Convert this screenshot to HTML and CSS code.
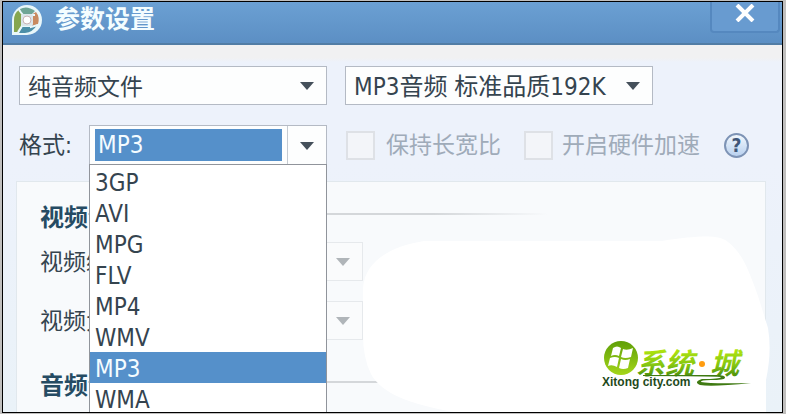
FILE: index.html
```html
<!DOCTYPE html>
<html lang="zh-CN">
<head>
    <meta charset="UTF-8">
    <meta name="viewport" content="width=device-width, initial-scale=1.0">
    <title>参数设置</title>
    <link rel="stylesheet" href="styles.css">
</head>
<body>

<div class="window">
    <header class="titlebar">
        <svg class="app-icon" viewBox="0 0 32 32" aria-hidden="true">
            <path d="M2 31V16A15 15 0 1 1 17 31Z" fill="#e9f7fa"/>
            <path d="M4 28V16Q4 9 9 6L13 12L11 24L8 28Z" fill="#86a650"/>
            <path d="M10 5Q17 1 25 7L21 11H12Z" fill="#6fa596"/>
            <path d="M26 8Q30 13 28 20L21 23V11Z" fill="#c88a60"/>
            <path d="M27 21Q23 28 15 29H9L13 22H21Z" fill="#4c8fa8"/>
            <path d="M9 6L13 11H25M21 11V23L28 21M21 22H12L8 28M12 22V11" fill="none" stroke="#e9f7fa" stroke-width="2"/>
            <rect x="11" y="10" width="12" height="12" rx="2" fill="#dbe6ea"/>
            <circle cx="17" cy="16" r="4" fill="#fff" stroke="#c9b3b6"/>
        </svg>
        <h1 class="title">参数设置</h1>
        <button class="close" type="button" aria-label="关闭">
            <svg viewBox="0 0 20 18"><path d="M2 1L18 17M18 1L2 17"/></svg>
        </button>
    </header>

    <form class="settings">
        <div class="row">
            <div class="dropdown">
                <select aria-label="文件类型"><option>纯音频文件</option></select>
            </div>
            <div class="dropdown quality">
                <select aria-label="品质"><option>MP3音频 标准品质192K</option></select>
            </div>
        </div>

        <div class="row format-row">
            <label class="format-label" for="format">格式:</label>
            <div class="combo">
                <input id="format" class="combo-input" type="text" value="MP3" role="combobox" aria-expanded="true" aria-controls="format-list">
                <button class="combo-button" type="button" aria-label="展开"></button>
                <ul id="format-list" class="combo-list" role="listbox">
                    <li role="option">3GP</li>
                    <li role="option">AVI</li>
                    <li role="option">MPG</li>
                    <li role="option">FLV</li>
                    <li role="option">MP4</li>
                    <li role="option">WMV</li>
                    <li role="option" class="selected" aria-selected="true">MP3</li>
                    <li role="option">WMA</li>
                </ul>
            </div>
            <label class="check"><input type="checkbox" disabled>保持长宽比</label>
            <label class="check"><input type="checkbox" disabled>开启硬件加速</label>
            <button class="help" type="button" aria-label="帮助">?</button>
        </div>

        <div class="panel">
            <h2 class="section-title">视频</h2>
            <div class="field">
                <label for="video-codec">视频编码:</label>
                <div class="dropdown disabled"><select id="video-codec" disabled></select></div>
            </div>
            <div class="field">
                <label for="video-size">视频大小:</label>
                <div class="dropdown disabled"><select id="video-size" disabled></select></div>
            </div>
            <h2 class="section-title">音频</h2>
        </div>
    </form>

    <svg class="cover" viewBox="0 0 408 178" aria-hidden="true">
        <path d="M1 54C3 28 26 13 62 7H300C340 1 357 1 366 8C380 19 386 34 396 62L406 94Q410 118 404 146V178H92C48 170 20 160 9 140Q1 124 1 100Z" fill="#fff"/>
    </svg>

    <svg class="logo" viewBox="0 0 160 52">
        <defs>
            <linearGradient id="ball" x1="0" y1="0" x2="0" y2="1">
                <stop offset="0" stop-color="#5f9f08"/>
                <stop offset="1" stop-color="#a4d61a"/>
            </linearGradient>
            <linearGradient id="leaf" x1="0" y1="0" x2="0" y2="1">
                <stop offset="0.2" stop-color="#b4e610"/>
                <stop offset="0.6" stop-color="#84c610"/>
                <stop offset="1" stop-color="#2f7208"/>
            </linearGradient>
        </defs>
        <circle cx="21" cy="20" r="17" fill="url(#ball)"/>
        <path d="M13 10Q17 7 21 10L19 18Q15 16 11 18ZM23 11Q27 13 33 10L31 19Q25 21 21 19ZM10 20Q15 18 19 20L17 29Q12 26 8 28ZM21 21Q25 23 30 21L28 30Q23 32 19 30Z" fill="#fff"/>
        <text class="logo-name" x="36" y="36">系统</text>
        <circle cx="102" cy="26" r="3" fill="#ff9c10"/>
        <text class="logo-name" x="110" y="36">城</text>
        <path d="M43 37H116Q126 37 125 40Q124 42 111 42Q100 42 101 44Q110 46 151 45Q112 49 100 47Q93 44 102 41Q120 41 121 39Q110 38 43 38Z" fill="#3f7a12"/>
        <text class="logo-url" x="2" y="48">Xitong city.com</text>
    </svg>
</div>

</body>
</html>
```
FILE: styles.css
```css
* {
    margin: 0;
    padding: 0;
    box-sizing: border-box;
}

body {
    display: flex;
    height: 100vh;
    padding: 1px 3px 1px 2px;
    overflow: hidden;
    background: #c0bfbe;
    color: #35444f;
    font: 23px/32px "DejaVu Sans Condensed", "Noto Sans CJK SC", sans-serif;
}

input, select, button {
    font: inherit;
    color: inherit;
}

.window {
    position: relative;
    flex: 1;
    display: flex;
    flex-direction: column;
    overflow: hidden;
    border: 1px solid #000;
    background: linear-gradient(#f1f1f2 56px, #edf2fb 60px, #edf2fb 160px, #eaf2f8);
}

/* Title bar */
.titlebar {
    display: flex;
    align-items: center;
    flex: none;
    height: 43px;
    padding: 0 2px 6px 7px;
    background: linear-gradient(#6ba0d3, #5c8fc4);
    border-bottom: 2px solid #527da5;
}

.app-icon {
    width: 32px;
    height: 32px;
    margin-right: 13px;
}

.title {
    flex: 1;
    color: #f4fdff;
    font-size: 25px;
    font-weight: 700;
}

.close {
    align-self: flex-start;
    width: 70px;
    height: 31px;
    border: 2px solid #5588bf;
    border-top: 0;
    border-radius: 0 0 4px 4px;
    background: #689bd0;
}

.close svg {
    display: block;
    width: 20px;
    height: 18px;
    margin: 0 auto 8px;
    fill: none;
    stroke: #fff;
    stroke-width: 4;
}

/* Form rows */
.settings {
    flex: 1;
    display: flex;
    flex-direction: column;
    padding-top: 21px;
}

.row {
    display: flex;
    align-items: center;
    gap: 18px;
    padding: 0 16px;
    margin-bottom: 20px;
}

.dropdown {
    position: relative;
    flex: 0 1 308px;
}

.dropdown select {
    display: block;
    width: 100%;
    height: 39px;
    padding: 3px 8px 0;
    appearance: none;
    border: 1px solid #b4bac4;
    border-radius: 0;
    background: #fdfefe;
}

.dropdown::after {
    content: "";
    position: absolute;
    top: 16px;
    right: 13px;
    border: 7px solid transparent;
    border-top: 8px solid #45505b;
    border-bottom: 0;
    pointer-events: none;
}

.dropdown.quality {
    font-size: 24px;
}

.dropdown.disabled select {
    border-color: #dfe2e6;
    background: #fbfcfd;
}

.dropdown.disabled::after {
    border-top-color: #b0b5b9;
}

.format-row {
    gap: 0;
    margin-bottom: 16px;
}

.format-label {
    flex: none;
    width: 70px;
}

/* Format combo box */
.combo {
    position: relative;
    display: flex;
    flex: 0 1 238px;
    min-width: 0;
    height: 40px;
    border: 1px solid #b4bac4;
    background: #fdfefe;
    font-size: 24px;
}

.combo-input {
    flex: 1;
    min-width: 0;
    margin: 3px 5px;
    padding: 0 3px;
    border: 0;
    background: #5590ca;
    color: #f4fcff;
}

.combo-button {
    flex: none;
    width: 39px;
    border: 0;
    border-left: 1px solid #c5cbd2;
    background: none;
}

.combo-button::after {
    content: "";
    display: block;
    width: 0;
    margin: 2px auto 0;
    border: 7px solid transparent;
    border-top: 8px solid #45505b;
    border-bottom: 0;
}

.combo-list {
    position: absolute;
    z-index: 5;
    top: 100%;
    left: -1px;
    right: -1px;
    padding-top: 1px;
    border: 1px solid #90949b;
    background: #fff;
    list-style: none;
}

.combo-list li {
    height: 31px;
    padding: 0 5px;
    line-height: 34px;
}

.combo-list .selected {
    background: #5590ca;
    color: #f4fcff;
}

/* Disabled check boxes */
.check {
    display: flex;
    align-items: center;
    flex: none;
    gap: 11px;
    margin-left: 19px;
    color: #9fabb9;
    white-space: nowrap;
}

.check + .check {
    gap: 9px;
    margin-left: 23px;
}

.check input {
    width: 29px;
    height: 29px;
    appearance: none;
    border: 2px solid #dee1e6;
    background: #f3f5f9;
}

.help {
    flex: none;
    width: 25px;
    height: 25px;
    margin-left: 24px;
    border: 2px solid #7d93b5;
    border-radius: 50%;
    background: linear-gradient(#f2f8fd, #b9d1ef);
    color: #3f5678;
    font-size: 19px;
    font-weight: 700;
    line-height: 21px;
}

/* Video and audio panel */
.panel {
    flex: 1;
    margin: 0 16px 0 13px;
    padding: 20px 24px 0 23px;
    border: 1px solid #e1e8ed;
    border-bottom: 0;
    background: #f8fafc;
}

.section-title {
    display: flex;
    margin-bottom: 8px;
    color: #254b63;
    font-size: 24px;
    font-weight: 700;
}

.section-title::after {
    content: "";
    flex: 0 1 460px;
    height: 2px;
    margin-top: 11px;
    background: linear-gradient(90deg, #d4d7da 75%, transparent);
}

.field {
    display: flex;
    align-items: center;
    margin-bottom: 20px;
}

.field label {
    width: 110px;
}

.field .dropdown {
    flex-basis: 213px;
}

.field + .section-title {
    margin-top: 30px;
}

/* White patch and site logo lying over the panel */
.cover {
    position: absolute;
    right: 12px;
    bottom: 0;
    width: 408px;
    height: 178px;
}

.logo {
    position: absolute;
    right: 22px;
    bottom: 22px;
    width: 160px;
    height: 52px;
}

.logo-name {
    fill: url(#leaf);
    font: italic 700 29px "Noto Sans CJK SC", sans-serif;
}

.logo-url {
    fill: #1f4a1c;
    font: bold 12px "Liberation Sans", sans-serif;
}
```
